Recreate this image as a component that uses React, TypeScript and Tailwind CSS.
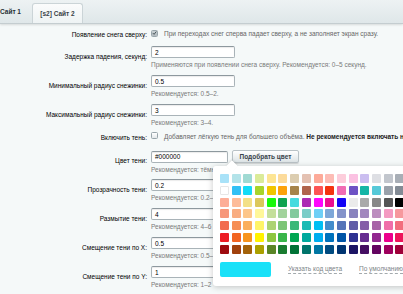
import React from "react";

const PALETTE: string[][] = [
  ["#a9e2f8","#b3e3e9","#a0dad3","#dbeb99","#fde594","#fcdb9b","#dccdb0","#e4c1b2","#fdaa99","#fdbcb5","#fdcddb","#fbc1e2","#cbbef0","#dedfe4","#c2c6cd","#a8aeb6"],
  ["#ffffff","#31c0f5","#13dbf7","#a7d42b","#f1c500","#fca20c","#a6844a","#b0644c","#fd5454","#f4330f","#f06cb4","#6e52c4","#15b5a6","#56c9d8","#9aa1aa","#838b95"],
  ["#fdae98","#fdbc9a","#f3e087","#dcc85c","#19f80c","#10a350","#45dbde","#ac2ab4","#ff05fd","#ec0d8f","#1303f5","#ebebeb","#aaaaaa","#888888","#555555","#000000"],
  ["#f7977a","#f9ad81","#fdc68a","#fff79a","#c4df9b","#a2d39c","#82ca9d","#7bcdc8","#6ecff6","#7ea7d8","#8493ca","#8882be","#a187be","#bc8dbf","#f49ac2","#f6989d"],
  ["#f26c4f","#f68e55","#fbaf5c","#fff467","#acd372","#7cc576","#3bb878","#1abbb4","#00bff3","#438ccb","#5574b9","#605ca8","#855fa8","#a763a8","#f06ea9","#f26d7d"],
  ["#ed1c24","#f26522","#f7941d","#fff200","#8dc63f","#39b54a","#00a651","#00a99d","#00aeef","#0072bc","#0054a6","#2e3192","#662d91","#92278f","#ec008c","#ed145b"],
  ["#9e0b0f","#a0410d","#a3620a","#aba000","#598527","#1a7b30","#007236","#00746b","#0076a3","#004b80","#003471","#1b1464","#440e62","#630460","#9e005d","#9e0039"],
];

function Checkbox({ checked }: { checked?: boolean }) {
  return (
    <span className={`inline-flex w-[7px] h-[7px] rounded-[1.5px] border border-[#98a5ab] shrink-0 items-center justify-center ${checked ? "bg-gradient-to-b from-[#c9d0d3] to-[#b1babe]" : "bg-gradient-to-b from-[#ffffff] to-[#e3e8ea]"}`}>
      {checked && (
        <svg width="6" height="6" viewBox="0 0 6 6">
          <path d="M1 3.1 L2.5 4.6 L5.2 1.2" fill="none" stroke="#3d4a50" strokeWidth="1.1" />
        </svg>
      )}
    </span>
  );
}

function CheckRow({ label, children, h }: { label: string; children: React.ReactNode; h: string }) {
  return (
    <div className={`grid grid-cols-[147px_1fr] gap-x-[4px] ${h}`}>
      <div className="text-right whitespace-nowrap pt-[1px]">{label}</div>
      <div className="flex items-start">
        <span className="pt-[0px]"><Checkbox checked={label.startsWith("Появление")} /></span>
        <span className="ml-[6px] whitespace-nowrap text-[#666] -mt-[0.5px]">{children}</span>
      </div>
    </div>
  );
}

function InputRow({
  label,
  value,
  hint,
  w = "w-[84px]",
  h = "h-[29px]",
  extra,
}: {
  label: string;
  value: string;
  hint: string;
  w?: string;
  h?: string;
  extra?: React.ReactNode;
}) {
  return (
    <div className={`grid grid-cols-[147px_1fr] gap-x-[4px] ${h}`}>
      <div className="text-right whitespace-nowrap pt-[6px]">{label}</div>
      <div className="flex flex-col">
        <div className="flex items-center">
          <div className={`${w} h-[12px] bg-white border border-[#a9b3b8] border-t-[#8d989e] rounded-[2px] shadow-[inset_0_1px_1px_rgba(0,0,0,0.08)] flex items-center pl-[3px] text-black`}>
            {value}
          </div>
          {extra}
        </div>
        <div className="mt-[2px] whitespace-nowrap text-[#7a7a7a]">{hint}</div>
      </div>
    </div>
  );
}

export default function App() {
  return (
    <div className="relative w-[403px] h-[294px] overflow-hidden bg-[#f5f9f9] font-['Liberation_Sans',Arial,sans-serif] text-[6.5px] leading-[9px] text-black">
      <div className="h-[24px] bg-gradient-to-b from-[#edf2f3] to-[#dfe7e9] border-b border-[#c4cdd0] shadow-[0_1px_2px_rgba(0,0,0,0.12)] flex items-end">
        <div className="w-[30px] h-[22px] flex items-center font-bold text-[#263035] pb-[1px]">Сайт 1</div>
        <div className="ml-[2px] w-[51px] h-[20px] bg-gradient-to-b from-[#fbfcfc] to-[#eef3f4] border border-b-0 border-[#cbd4d7] rounded-t-[3px] flex items-center justify-center font-bold text-[#3a4247]">
          [s2] Сайт 2
        </div>
      </div>

      <div className="flex flex-col pt-[5px]">
        <CheckRow label="Появление снега сверху:" h="h-[17px]">
          При переходах снег сперва падает сверху, а не заполняет экран сразу.
        </CheckRow>
        <InputRow label="Задержка падения, секунд:" value="2" hint="Применяются при появлении снега сверху. Рекомендуется: 0–5 секунд." />
        <InputRow label="Минимальный радиус снежинки:" value="0.5" hint="Рекомендуется: 0.5–2." />
        <InputRow label="Максимальный радиус снежинки:" value="3" hint="Рекомендуется: 3–4." h="h-[28px]" />
        <CheckRow label="Включить тень:" h="h-[18px]">
          Добавляет лёгкую тень для большего объёма.{" "}
          <b className="text-[#222]">Не рекомендуется включать на слабых устройствах.</b>
        </CheckRow>
        <InputRow
          label="Цвет тени:"
          value="#000000"
          w="w-[77px]"
          hint="Рекомендуется: тёмный (#000000)"
          extra={
            <div className="ml-[4px] w-[67px] h-[13px] rounded-[2px] border border-[#b9c2c6] bg-gradient-to-b from-[#ffffff] to-[#dde4e6] shadow-[0_1px_1px_rgba(0,0,0,0.15)] flex items-center justify-center font-bold text-[#38434a]">
              Подобрать цвет
            </div>
          }
        />
        <InputRow label="Прозрачность тени:" value="0.2" hint="Рекомендуется: 0.2–0.4" />
        <InputRow label="Размытие тени:" value="4" hint="Рекомендуется: 4–6" />
        <InputRow label="Смещение тени по X:" value="0.5" hint="Рекомендуется: 0.5–1" />
        <InputRow label="Смещение тени по Y:" value="1" hint="Рекомендуется: 1–2" />
      </div>

      <div className="absolute left-[213px] top-[166px] w-[200px] h-[120px] bg-white rounded-[3px] shadow-[0_1px_6px_rgba(0,0,0,0.22)] pl-[7px] pt-[8px]">
        <div className="absolute -top-[4px] left-[15px] w-[8px] h-[8px] bg-white rotate-45 shadow-[-1px_-1px_2px_rgba(0,0,0,0.1)]" />
        <div className="relative grid grid-cols-[repeat(16,9px)] gap-x-[2.7px] gap-y-[2.8px]">
          {PALETTE.flat().map((c, i) => (
            <div
              key={i}
              className={`w-[9px] h-[9px] rounded-[1px] ${c === "#ffffff" ? "border border-[#e6e6e6]" : ""}`}
              style={{ backgroundColor: c }}
            />
          ))}
        </div>
        <div className="mt-[8px] flex items-center">
          <div className="w-[51px] h-[15px] rounded-[2px] bg-[#19e1f8]" />
          <span className="ml-[17px] whitespace-nowrap text-[#7d8588] border-b border-dashed border-[#a3aaad] leading-[8px]">Указать код цвета</span>
          <span className="ml-[17px] whitespace-nowrap text-[#7d8588] border-b border-dashed border-[#a3aaad] leading-[8px]">По умолчанию</span>
        </div>
      </div>
    </div>
  );
}
